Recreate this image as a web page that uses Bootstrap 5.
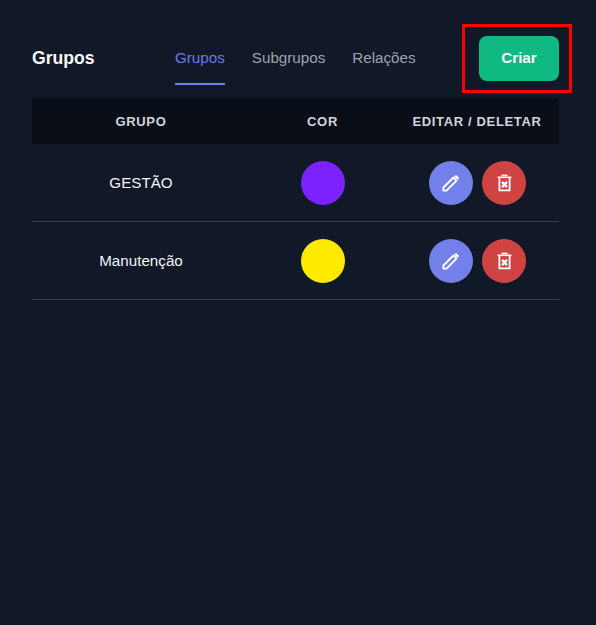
<!DOCTYPE html>
<html lang="pt">
<head>
<meta charset="utf-8">
<title>Grupos</title>
<link href="https://cdn.jsdelivr.net/npm/bootstrap@5.3.0/dist/css/bootstrap.min.css" rel="stylesheet">
<style>
html,body{height:100%}
body{background:#111827;font-family:"Liberation Sans",Arial,sans-serif;color:#f3f4f6;overflow:hidden}
.wrap{padding:36px 37px 0 32px;position:relative}
.topbar{height:62px;align-items:flex-start}
.ttl{font-size:17.6px;font-weight:700;color:#f9fafb;line-height:44px;width:143px}
.tabs{gap:27px}
.tabitem{font-size:15.2px;color:#9ca3af;height:49px;line-height:44px;text-decoration:none;display:block;border-bottom:2px solid transparent}
.tabitem.on{color:#6a78e8;border-bottom-color:#737fe8}
.go{background:#10b981;border:0;color:#f9fafb;font-weight:700;font-size:15.2px;width:80px;height:45px;border-radius:8px;padding:0}
.go:hover{background:#10b981;color:#f9fafb}
.annot{position:absolute;left:462px;top:24px;width:109.5px;height:68.5px;border:3px solid #f00;pointer-events:none}
.gridtbl{width:527px;table-layout:fixed;border-collapse:separate;border-spacing:0}
.gridtbl th{background:#0a0e17;height:46px;font-size:13px;letter-spacing:.65px;color:#d1d5db;font-weight:700;text-align:center;padding:1px 0 0;text-transform:uppercase}
.gridtbl td{height:78px;padding:1px 0 0;text-align:center;font-size:15.2px;color:#f3f4f6;border-bottom:1px solid #374151;vertical-align:middle}
.dot{width:44px;height:44px;border-radius:50%;display:block;margin:0 auto}
.acts{gap:9px;padding-left:1px}
.roundbtn{width:44px;height:44px;border-radius:50%;border:0;padding:0;display:flex;align-items:center;justify-content:center}
.edit{background:#7480e9}
.del{background:#d04343}
.c-purple{background:#7b22ff}
.c-yellow{background:#ffea00}
</style>
</head>
<body>
<div class="wrap">
  <div class="d-flex topbar">
    <div class="ttl">Grupos</div>
    <div class="d-flex tabs">
      <a class="tabitem on" href="#">Grupos</a>
      <a class="tabitem" href="#">Subgrupos</a>
      <a class="tabitem" href="#">Relações</a>
    </div>
    <button class="btn go ms-auto" type="button">Criar</button>
  </div>
  <div class="annot"></div>
  <table class="gridtbl">
    <colgroup><col style="width:218px"><col style="width:145px"><col style="width:164px"></colgroup>
    <thead><tr><th>Grupo</th><th>Cor</th><th>Editar / Deletar</th></tr></thead>
    <tbody>
      <tr>
        <td>GESTÃO</td>
        <td><span class="dot c-purple"></span></td>
        <td><div class="d-flex justify-content-center acts">
          <button class="roundbtn edit" type="button" aria-label="Editar"><svg width="20" height="20" viewBox="0 0 20 20" fill="none" stroke="#fff" stroke-width="1.9"><path d="M2.4 17.6v-3.1L12.4 4.5l3.1 3.1-10 10z" stroke-linejoin="round"/><path d="M15 2.2l2.8 2.8-1.2 1.2-2.8-2.8z" fill="#fff" stroke-width="1"/></svg></button>
          <button class="roundbtn del" type="button" aria-label="Deletar"><svg width="20" height="20" viewBox="0 0 20 20" fill="none" stroke="#fff" stroke-width="1.8"><path d="M7.5 2.4h6" stroke-width="1.5"/><path d="M3.6 4.3h13.8" stroke-width="1.6"/><path d="M5.4 4.6v12.7h10.2V4.6"/><path d="M8 8.9l5 5.2M13 8.9l-5 5.2" stroke-width="2.3"/></svg></button>
        </div></td>
      </tr>
      <tr>
        <td>Manutenção</td>
        <td><span class="dot c-yellow"></span></td>
        <td><div class="d-flex justify-content-center acts">
          <button class="roundbtn edit" type="button" aria-label="Editar"><svg width="20" height="20" viewBox="0 0 20 20" fill="none" stroke="#fff" stroke-width="1.9"><path d="M2.4 17.6v-3.1L12.4 4.5l3.1 3.1-10 10z" stroke-linejoin="round"/><path d="M15 2.2l2.8 2.8-1.2 1.2-2.8-2.8z" fill="#fff" stroke-width="1"/></svg></button>
          <button class="roundbtn del" type="button" aria-label="Deletar"><svg width="20" height="20" viewBox="0 0 20 20" fill="none" stroke="#fff" stroke-width="1.8"><path d="M7.5 2.4h6" stroke-width="1.5"/><path d="M3.6 4.3h13.8" stroke-width="1.6"/><path d="M5.4 4.6v12.7h10.2V4.6"/><path d="M8 8.9l5 5.2M13 8.9l-5 5.2" stroke-width="2.3"/></svg></button>
        </div></td>
      </tr>
    </tbody>
  </table>
</div>
<script src="https://cdn.jsdelivr.net/npm/bootstrap@5.3.0/dist/js/bootstrap.bundle.min.js"></script>
</body>
</html>
